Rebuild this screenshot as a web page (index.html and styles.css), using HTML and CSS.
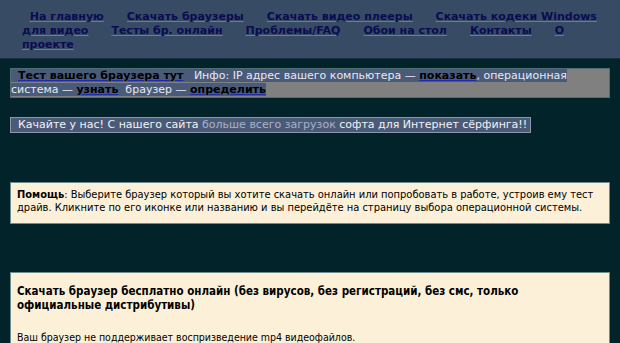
FILE: index.html
```html
<!DOCTYPE html>
<html lang="ru">
<head>
    <meta charset="UTF-8">
    <title>Скачать браузер бесплатно</title>
    <link rel="stylesheet" href="styles.css">
</head>
<body>
    <div class="top-menu">
        <p>&nbsp; <a href="#">На главную</a>&nbsp; &nbsp; &nbsp; <a href="#">Скачать браузеры</a>&nbsp; &nbsp; &nbsp; <a href="#">Скачать видео плееры</a>&nbsp; &nbsp; &nbsp; <a href="#">Скачать кодеки Windows для видео</a>&nbsp; &nbsp; &nbsp; <a href="#">Тесты бр. онлайн</a>&nbsp; &nbsp; &nbsp; <a href="#">Проблемы/FAQ</a>&nbsp; &nbsp; &nbsp; <a href="#">Обои на стол</a>&nbsp; &nbsp; &nbsp; <a href="#">Контакты</a>&nbsp; &nbsp; &nbsp; <a href="#">О проекте</a></p>
    </div>

    <div class="info-box">
        <span class="hl">&nbsp; <a href="#" class="dark-link">Тест вашего браузера тут</a> &nbsp; Инфо: IP адрес вашего компьютера — <a href="#" class="dark-link">показать</a>, операционная система — <a href="#" class="dark-link">узнать</a> &nbsp;браузер — <a href="#" class="dark-link">определить</a></span>
    </div>

    <div class="promo">
        &nbsp; Качайте у нас! С нашего сайта <span class="muted">больше всего загрузок</span> софта для Интернет сёрфинга!!
    </div>

    <div class="help-box">
        <b>Помощь</b>: Выберите браузер который вы хотите скачать онлайн или попробовать в работе, устроив ему тест драйв. Кликните по его иконке или названию и вы перейдёте на страницу выбора операционной системы.
    </div>

    <div class="main-box">
        <h1>Скачать браузер бесплатно онлайн (без вирусов, без регистраций, без смс, только официальные дистрибутивы)</h1>
        <p>Ваш браузер не поддерживает воспризведение mp4 видеофайлов.</p>
    </div>
</body>
</html>
```
FILE: styles.css
```css
body {
    margin: 0;
    background-color: #02232a;
    font-family: 'DejaVu Sans', Verdana, sans-serif;
    font-size: 11px;
}
.top-menu {
    background-color: #384b65;
    border-bottom: 1px solid #1c3040;
    padding: 10px 12px 4px 22px;
    height: 44px;
}
.top-menu p {
    margin: 0;
    line-height: 14px;
    font-weight: bold;
    font-size: 11px;
}
.top-menu a {
    color: #0b0b52;
    text-decoration: underline;
    text-decoration-color: #6b7b9c;
}
.info-box {
    margin: 9px 10px 0 10px;
    background: #808080;
    border: 1px solid #4d6f73;
    line-height: 14px;
    color: #e6e9f0;
    padding-right: 30px;
}
.hl {
    background: #4a5b7a;
}
.dark-link {
    color: #000;
    font-weight: bold;
    text-decoration-color: #1d2bb0;
}
.promo {
    display: inline-block;
    margin: 19px 0 0 10px;
    background: #4a5b7a;
    border: 1px solid #8a98a8;
    color: #f2f2f2;
    line-height: 14px;
    padding: 0 3px 0 0;
}
.muted {
    color: #a8b2c4;
}
.help-box {
    margin: 49px 10px 0 10px;
    background: #fdf0d9;
    border: 1px solid #6f8c8c;
    color: #000;
    padding: 5px 5px 9px 6px;
    font-family: Tahoma, 'DejaVu Sans Condensed', sans-serif;
    font-size: 11px;
    line-height: 13px;
}
.main-box {
    margin: 48px 10px 0 10px;
    background: #fdf0d9;
    border: 1px solid #6f8c8c;
    padding: 8px 6px 10px 6px;
    height: 120px;
}
.main-box h1 {
    margin: 3px 0 0 0;
    font-size: 11.5px;
    line-height: 14px;
    font-family: 'DejaVu Sans Condensed', 'DejaVu Sans', sans-serif;
}
.main-box p {
    margin: 19px 0 0 0;
    font-family: Tahoma, 'DejaVu Sans Condensed', sans-serif;
    font-size: 10.5px;
}
```
